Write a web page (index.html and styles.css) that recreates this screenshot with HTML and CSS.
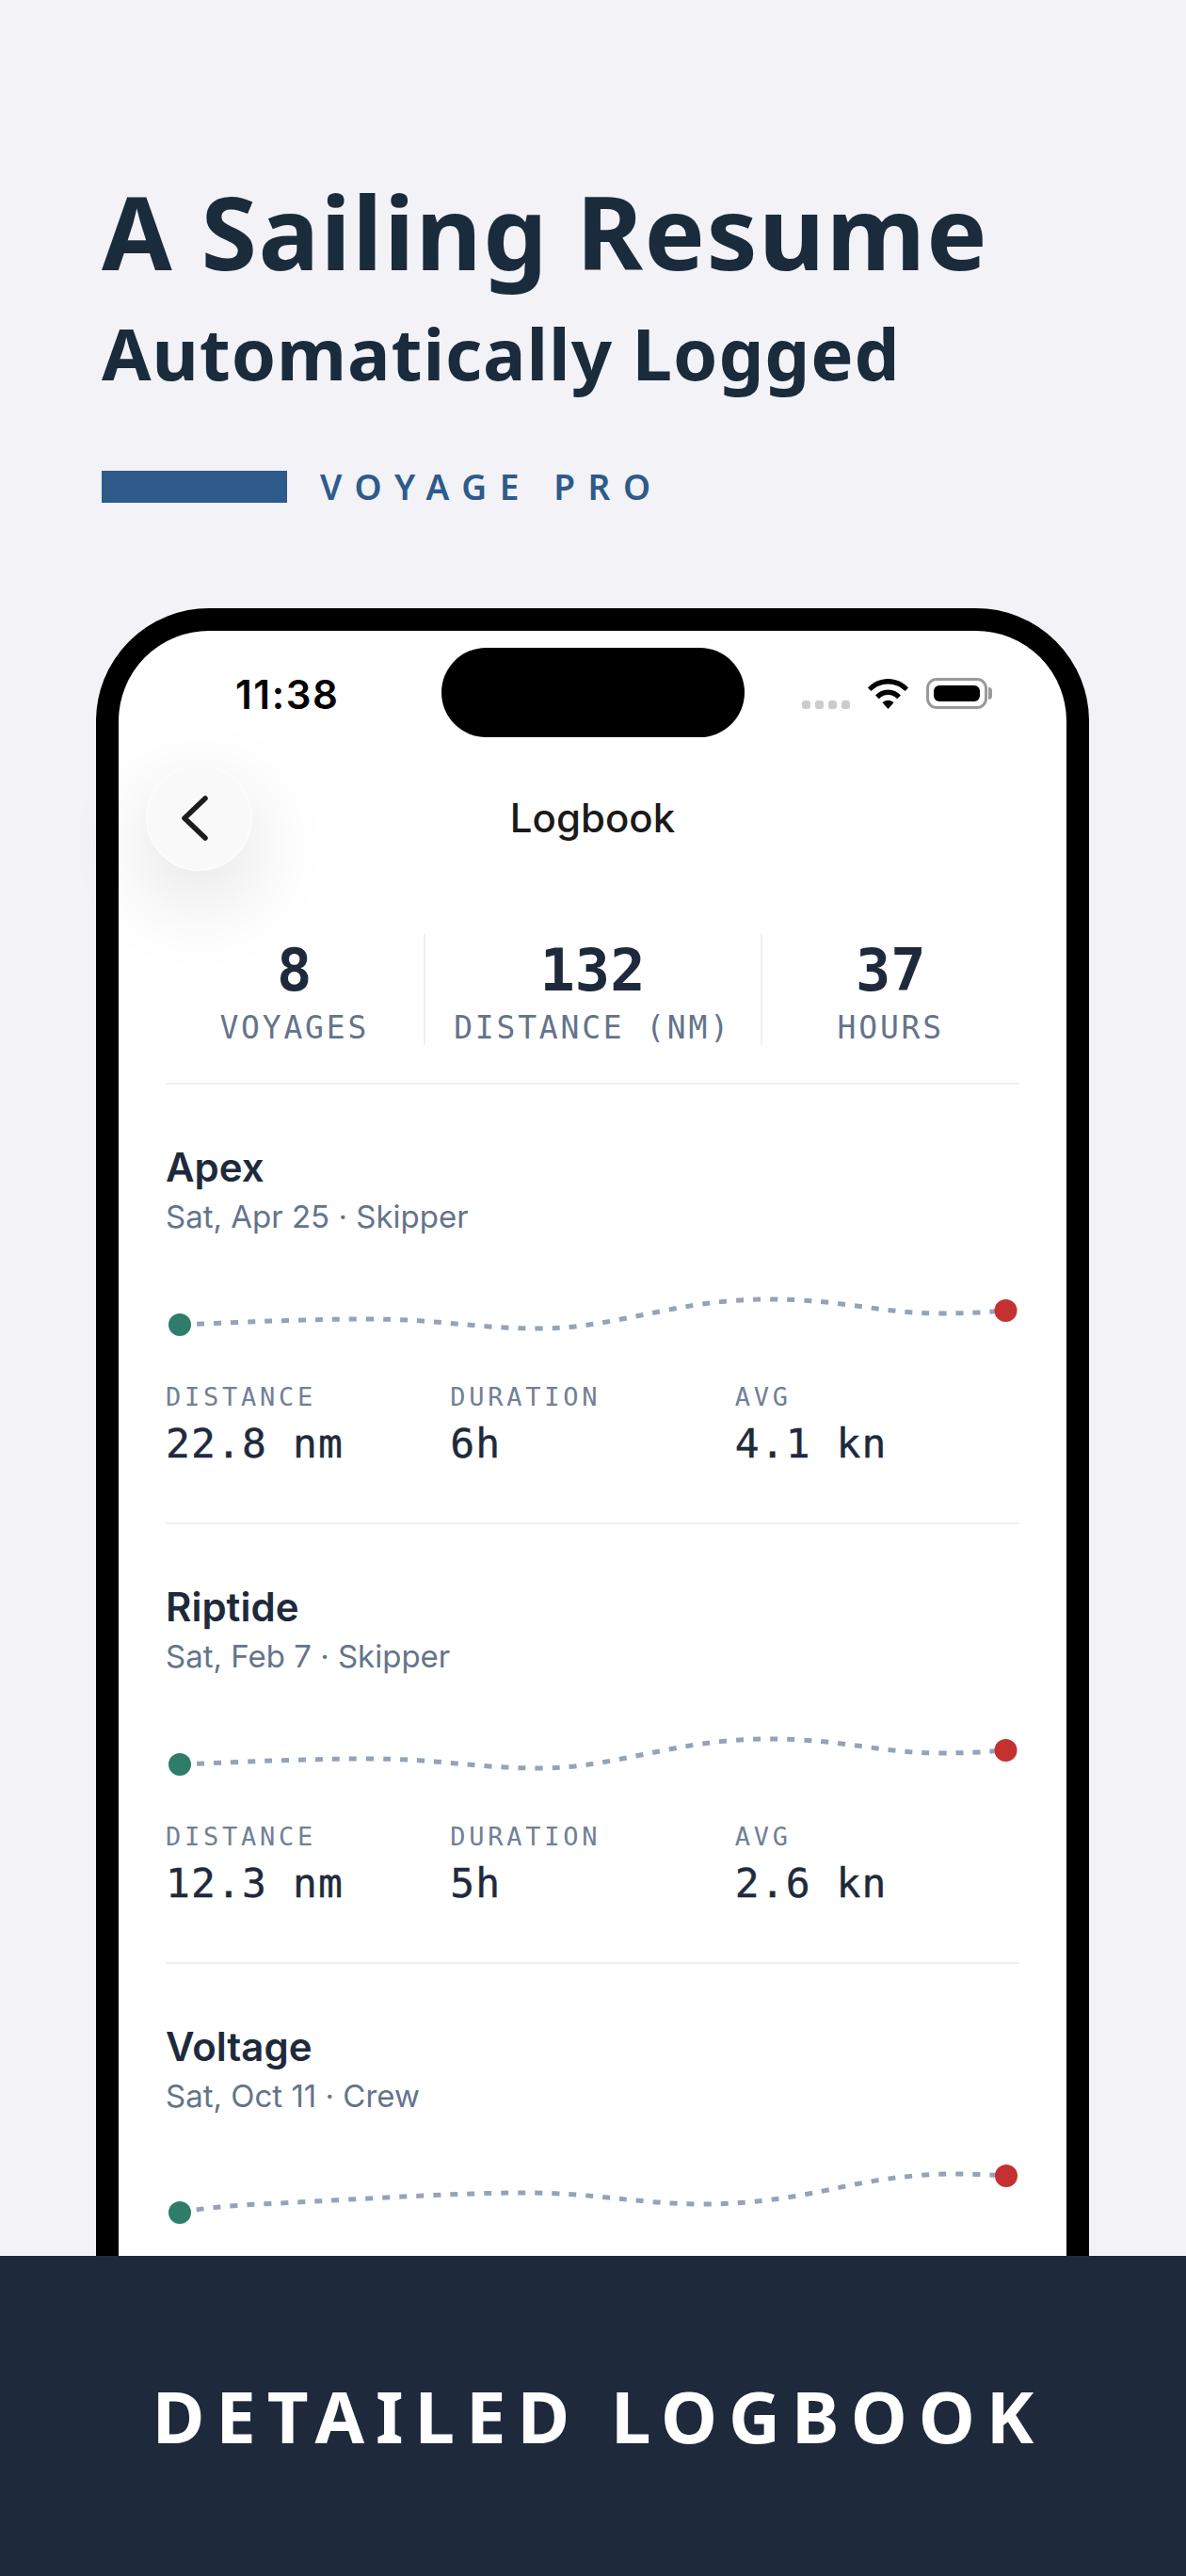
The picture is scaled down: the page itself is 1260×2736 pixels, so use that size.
FILE: index.html
```html
<!DOCTYPE html>
<html lang="en">
<head>
    <meta charset="UTF-8">
    <meta name="viewport" content="width=device-width, initial-scale=1.0">
    <title>Detailed Logbook</title>
    <link rel="stylesheet" href="styles.css">
</head>
<body>

<header class="hero">
    <h1>A Sailing Resume</h1>
    <h2>Automatically Logged</h2>
    <div class="brand">
        <span class="brand-bar"></span>
        <span class="brand-name">VOYAGE PRO</span>
    </div>
</header>

<div class="phone-clip">
    <div class="phone">
        <div class="status">
            <div class="time">11:38</div>
            <div class="island"></div>
            <div class="status-icons">
                <span class="signal"><i></i><i></i><i></i><i></i></span>
                <svg class="wifi" width="43" height="32" viewBox="0 0 43 32">
                    <path d="M0 9.500C5.500 3.500 13 0 21.500 0S37.500 3.500 43 9.500L39.500 13C34.800 8.200 28.500 5.400 21.500 5.400S8.200 8.200 3.500 13Z"/>
                    <path d="M8 17.500C11.500 13.800 16.200 11.600 21.500 11.600S31.500 13.800 35 17.500L31.200 21.200C28.700 18.500 25.300 17 21.500 17S14.300 18.500 11.800 21.200Z"/>
                    <path d="M15.500 25.200C17 23.600 19.100 22.700 21.500 22.700S26 23.600 27.500 25.200L21.500 32Z"/>
                </svg>
                <span class="battery"><span class="battery-fill"></span></span>
            </div>
        </div>

        <div class="nav">
            <div class="back">
                <svg width="29" height="48" viewBox="0 0 29 48">
                    <path d="M26 3L4 24L26 45" fill="none" stroke="#1c1c1e" stroke-width="5.500" stroke-linecap="round" stroke-linejoin="round"/>
                </svg>
            </div>
            <div class="nav-title">Logbook</div>
        </div>

        <div class="content">
            <div class="stats">
                <div class="stat">
                    <div class="stat-num">8</div>
                    <div class="stat-label">VOYAGES</div>
                </div>
                <div class="stat stat-wide">
                    <div class="stat-num">132</div>
                    <div class="stat-label">DISTANCE (NM)</div>
                </div>
                <div class="stat">
                    <div class="stat-num">37</div>
                    <div class="stat-label">HOURS</div>
                </div>
            </div>

            <!-- Apex -->
            <div class="voyage">
                <div class="voyage-name">Apex</div>
                <div class="voyage-meta">Sat, Apr 25 · Skipper</div>
                <svg class="route" width="908" height="60" viewBox="0 0 908 60">
                    <path class="route-line" d="M15 39C90 36 150 33 216 33C290 33 330 43 396 43C480 43 540 12 641 12C720 12 760 27 822 27C850 27 870 26 892 24"/>
                    <circle cx="15" cy="39" r="12" fill="#2e7d6b"/>
                    <circle cx="892.500" cy="24" r="12" fill="#c53030"/>
                </svg>
                <div class="metrics">
                    <div><div class="metric-label">DISTANCE</div><div class="metric-value">22.8 nm</div></div>
                    <div><div class="metric-label">DURATION</div><div class="metric-value">6h</div></div>
                    <div><div class="metric-label">AVG</div><div class="metric-value">4.1 kn</div></div>
                </div>
            </div>

            <!-- Riptide -->
            <div class="voyage">
                <div class="voyage-name">Riptide</div>
                <div class="voyage-meta">Sat, Feb 7 · Skipper</div>
                <svg class="route" width="908" height="60" viewBox="0 0 908 60">
                    <path class="route-line" d="M15 39C90 36 150 33 216 33C290 33 330 43 396 43C480 43 540 12 641 12C720 12 760 27 822 27C850 27 870 26 892 24"/>
                    <circle cx="15" cy="39" r="12" fill="#2e7d6b"/>
                    <circle cx="892.500" cy="24" r="12" fill="#c53030"/>
                </svg>
                <div class="metrics">
                    <div><div class="metric-label">DISTANCE</div><div class="metric-value">12.3 nm</div></div>
                    <div><div class="metric-label">DURATION</div><div class="metric-value">5h</div></div>
                    <div><div class="metric-label">AVG</div><div class="metric-value">2.6 kn</div></div>
                </div>
            </div>

            <!-- Voltage -->
            <div class="voyage">
                <div class="voyage-name">Voltage</div>
                <div class="voyage-meta">Sat, Oct 11 · Crew</div>
                <svg class="route" width="908" height="60" viewBox="0 0 908 60">
                    <path class="route-line" d="M15 48C40 43 65 41 100 39C170 36 300 27 379 27C460 27 500 39 572 39C630 39 680 29 708 23C750 14 790 7 840 7C860 7 880 8 893 9"/>
                    <circle cx="15" cy="48" r="12" fill="#2e7d6b"/>
                    <circle cx="893" cy="9" r="12" fill="#c53030"/>
                </svg>
            </div>
        </div>
    </div>
</div>

<footer class="banner">DETAILED LOGBOOK</footer>

</body>
</html>
```

FILE: styles.css
```css
* {
    box-sizing: border-box;
}

html, body {
    margin: 0;
    padding: 0;
}

body {
    width: 1260px;
    height: 2736px;
    overflow: hidden;
    background-color: #f2f2f7;
    font-family: 'Inter', sans-serif;
}

/* Top heading */
.hero {
    height: 646px;
    padding: 186px 0 0 108px;
    color: #1a2b3c;
    font-family: 'Noto Sans', sans-serif;
}

.hero h1 {
    margin: 0;
    font-size: 108px;
    font-weight: 700;
    letter-spacing: 1.4px;
    line-height: 120px;
}

.hero h2 {
    margin: 25px 0 0;
    font-size: 76px;
    font-weight: 700;
    letter-spacing: 0.9px;
    line-height: 88px;
}

.brand {
    display: flex;
    align-items: center;
    gap: 35px;
    margin-top: 81px;
}

.brand-bar {
    width: 197px;
    height: 34px;
    background-color: #2e5b8a;
}

.brand-name {
    color: #2e5b8a;
    font-size: 37px;
    font-weight: 600;
    letter-spacing: 13.6px;
    line-height: 34px;
}

/* Phone frame, cut off by the banner */
.phone-clip {
    height: 1750px;
    overflow: hidden;
}

.phone {
    width: 1055px;
    height: 2000px;
    margin-left: 102px;
    background-color: #fff;
    border: 24px solid #000;
    border-radius: 120px;
}

.status {
    display: grid;
    grid-template-columns: 1fr 322px 1fr;
    padding-top: 18px;
}

.time {
    padding: 25px 0 0 124px;
    color: #000;
    font-size: 42px;
    font-weight: 600;
    letter-spacing: 1.6px;
    line-height: 50px;
}

.island {
    height: 95px;
    background-color: #000;
    border-radius: 48px;
}

.status-icons {
    display: flex;
    align-items: flex-end;
    justify-content: flex-end;
    height: 65px;
    padding-right: 84px;
}

.signal {
    display: flex;
    gap: 5px;
    margin-right: 19px;
}

.signal i {
    width: 9px;
    height: 9px;
    background-color: #ccc;
    border-radius: 3px;
}

.wifi {
    display: block;
    margin-right: 19px;
}

.battery {
    position: relative;
    width: 65px;
    height: 33px;
    padding: 5px;
    border: 3px solid #999;
    border-radius: 11px;
}

.battery::after {
    content: "";
    position: absolute;
    top: 7px;
    right: -8px;
    width: 4px;
    height: 13px;
    background-color: #999;
    border-radius: 0 4px 4px 0;
}

.battery-fill {
    display: block;
    height: 100%;
    background-color: #000;
    border-radius: 6px;
}

.nav {
    display: flex;
    align-items: center;
    justify-content: center;
    position: relative;
    height: 113px;
    margin-top: 29px;
}

.back {
    position: absolute;
    left: 29px;
    top: 0;
    display: flex;
    align-items: center;
    justify-content: center;
    width: 113px;
    height: 113px;
    padding-right: 10px;
    background-color: #f9f9f9;
    border: 2px solid #fcfcfc;
    border-radius: 50%;
    box-shadow: 0 30px 90px rgba(0, 0, 0, 0.13);
}

.nav-title {
    color: #1a1a1a;
    font-size: 42px;
    font-weight: 500;
}

.content {
    padding: 0 50px;
}

.stats {
    display: flex;
    margin-top: 67px;
    padding-bottom: 40px;
    border-bottom: 2px solid #eef0f3;
}

.stat {
    flex: 1;
    height: 118px;
    text-align: center;
}

.stat-wide {
    flex: 0 0 360px;
    border-left: 2px solid #eef0f3;
    border-right: 2px solid #eef0f3;
}

.stat-num {
    padding-top: 3px;
    color: #1e2a3c;
    font-family: 'DejaVu Sans Mono', monospace;
    font-size: 62px;
    font-weight: 700;
    line-height: 72px;
}

.stat-label {
    margin-top: 2px;
    color: #64748b;
    font-family: 'DejaVu Sans Mono', monospace;
    font-size: 33px;
    letter-spacing: 2.8px;
    line-height: 46px;
}

.voyage {
    height: 467px;
    padding-top: 64px;
    border-bottom: 2px solid #eef0f3;
}

.voyage-name {
    color: #1e2a3c;
    font-size: 42px;
    font-weight: 600;
    line-height: 48px;
}

.voyage-meta {
    margin-top: 6px;
    color: #64748b;
    font-size: 33px;
    line-height: 44px;
}

.route {
    display: block;
    margin-top: 54px;
    overflow: visible;
}

.route-line {
    fill: none;
    stroke: #94a3b8;
    stroke-width: 5;
    stroke-dasharray: 8 10;
}

.metrics {
    display: grid;
    grid-template-columns: repeat(3, 1fr);
    margin-top: 38px;
}

.metric-label {
    color: #718096;
    font-family: 'DejaVu Sans Mono', monospace;
    font-size: 27px;
    letter-spacing: 3.75px;
    line-height: 36px;
}

.metric-value {
    margin-top: 3px;
    color: #1e2a3c;
    font-family: 'DejaVu Sans Mono', monospace;
    font-size: 43px;
    letter-spacing: 1.1px;
    line-height: 56px;
    -webkit-text-stroke: 0.4px #1e2a3c;
}

.banner {
    height: 340px;
    padding: 125px 0 0 12px;
    background-color: #1e2a3c;
    color: #fff;
    font-family: 'Noto Sans', sans-serif;
    font-size: 76px;
    font-weight: 700;
    letter-spacing: 12px;
    line-height: 90px;
    text-align: center;
}
```
